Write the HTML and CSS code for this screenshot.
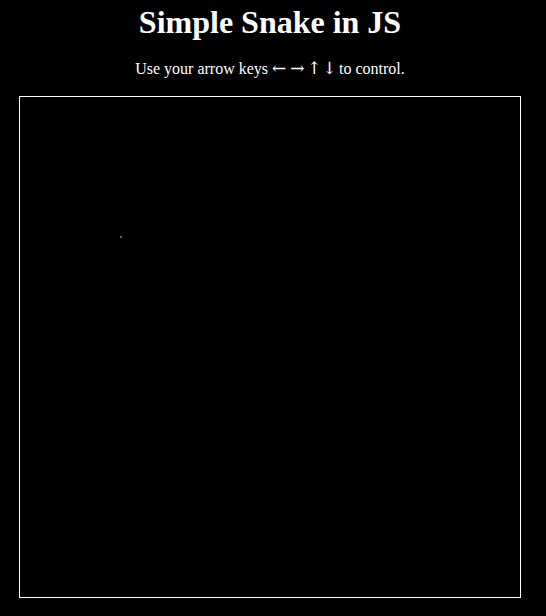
FILE: index.html
```html
<!DOCTYPE html>
<html>
<head>
<meta charset="utf-8">
<title>Simple Snake in JS</title>
<link rel="stylesheet" href="styles.css">
</head>
<body>
<div class="page">
  <h1 class="title">Simple Snake in JS</h1>
  <p class="hint">Use your arrow keys <span class="arrow">←</span> <span class="arrow">→</span> <span class="arrow arrow-v">↑</span> <span class="arrow arrow-v">↓</span> to control.</p>
  <div class="board">
    <div class="snake"></div>
  </div>
</div>
</body>
</html>
```
FILE: styles.css
```css
html, body {
  margin: 0;
  padding: 0;
  background: #000;
}
body {
  color: #fff;
  font-family: "Liberation Serif", "Times New Roman", serif;
  overflow: hidden;
}
.page {
  width: 540px;
  text-align: center;
}
.title {
  margin: 4px 0 0;
  font-size: 32px;
  line-height: 37px;
  font-weight: bold;
}
.hint {
  margin: 19px 0 0;
  font-size: 16px;
  line-height: 18px;
}
.arrow {
  font-family: "DejaVu Serif", serif;
  font-size: 17px;
  line-height: 16px;
}
.arrow-v {
  display: inline-block;
  margin: 0 -1.5px;
}
.board {
  position: relative;
  margin: 18px 0 0 19px;
  width: 500px;
  height: 500px;
  border: 1px solid #fff;
  background: #000;
}
.snake {
  position: absolute;
  left: 100px;
  top: 139px;
  width: 2px;
  height: 2px;
  background: #1a8a1a;
}
```
